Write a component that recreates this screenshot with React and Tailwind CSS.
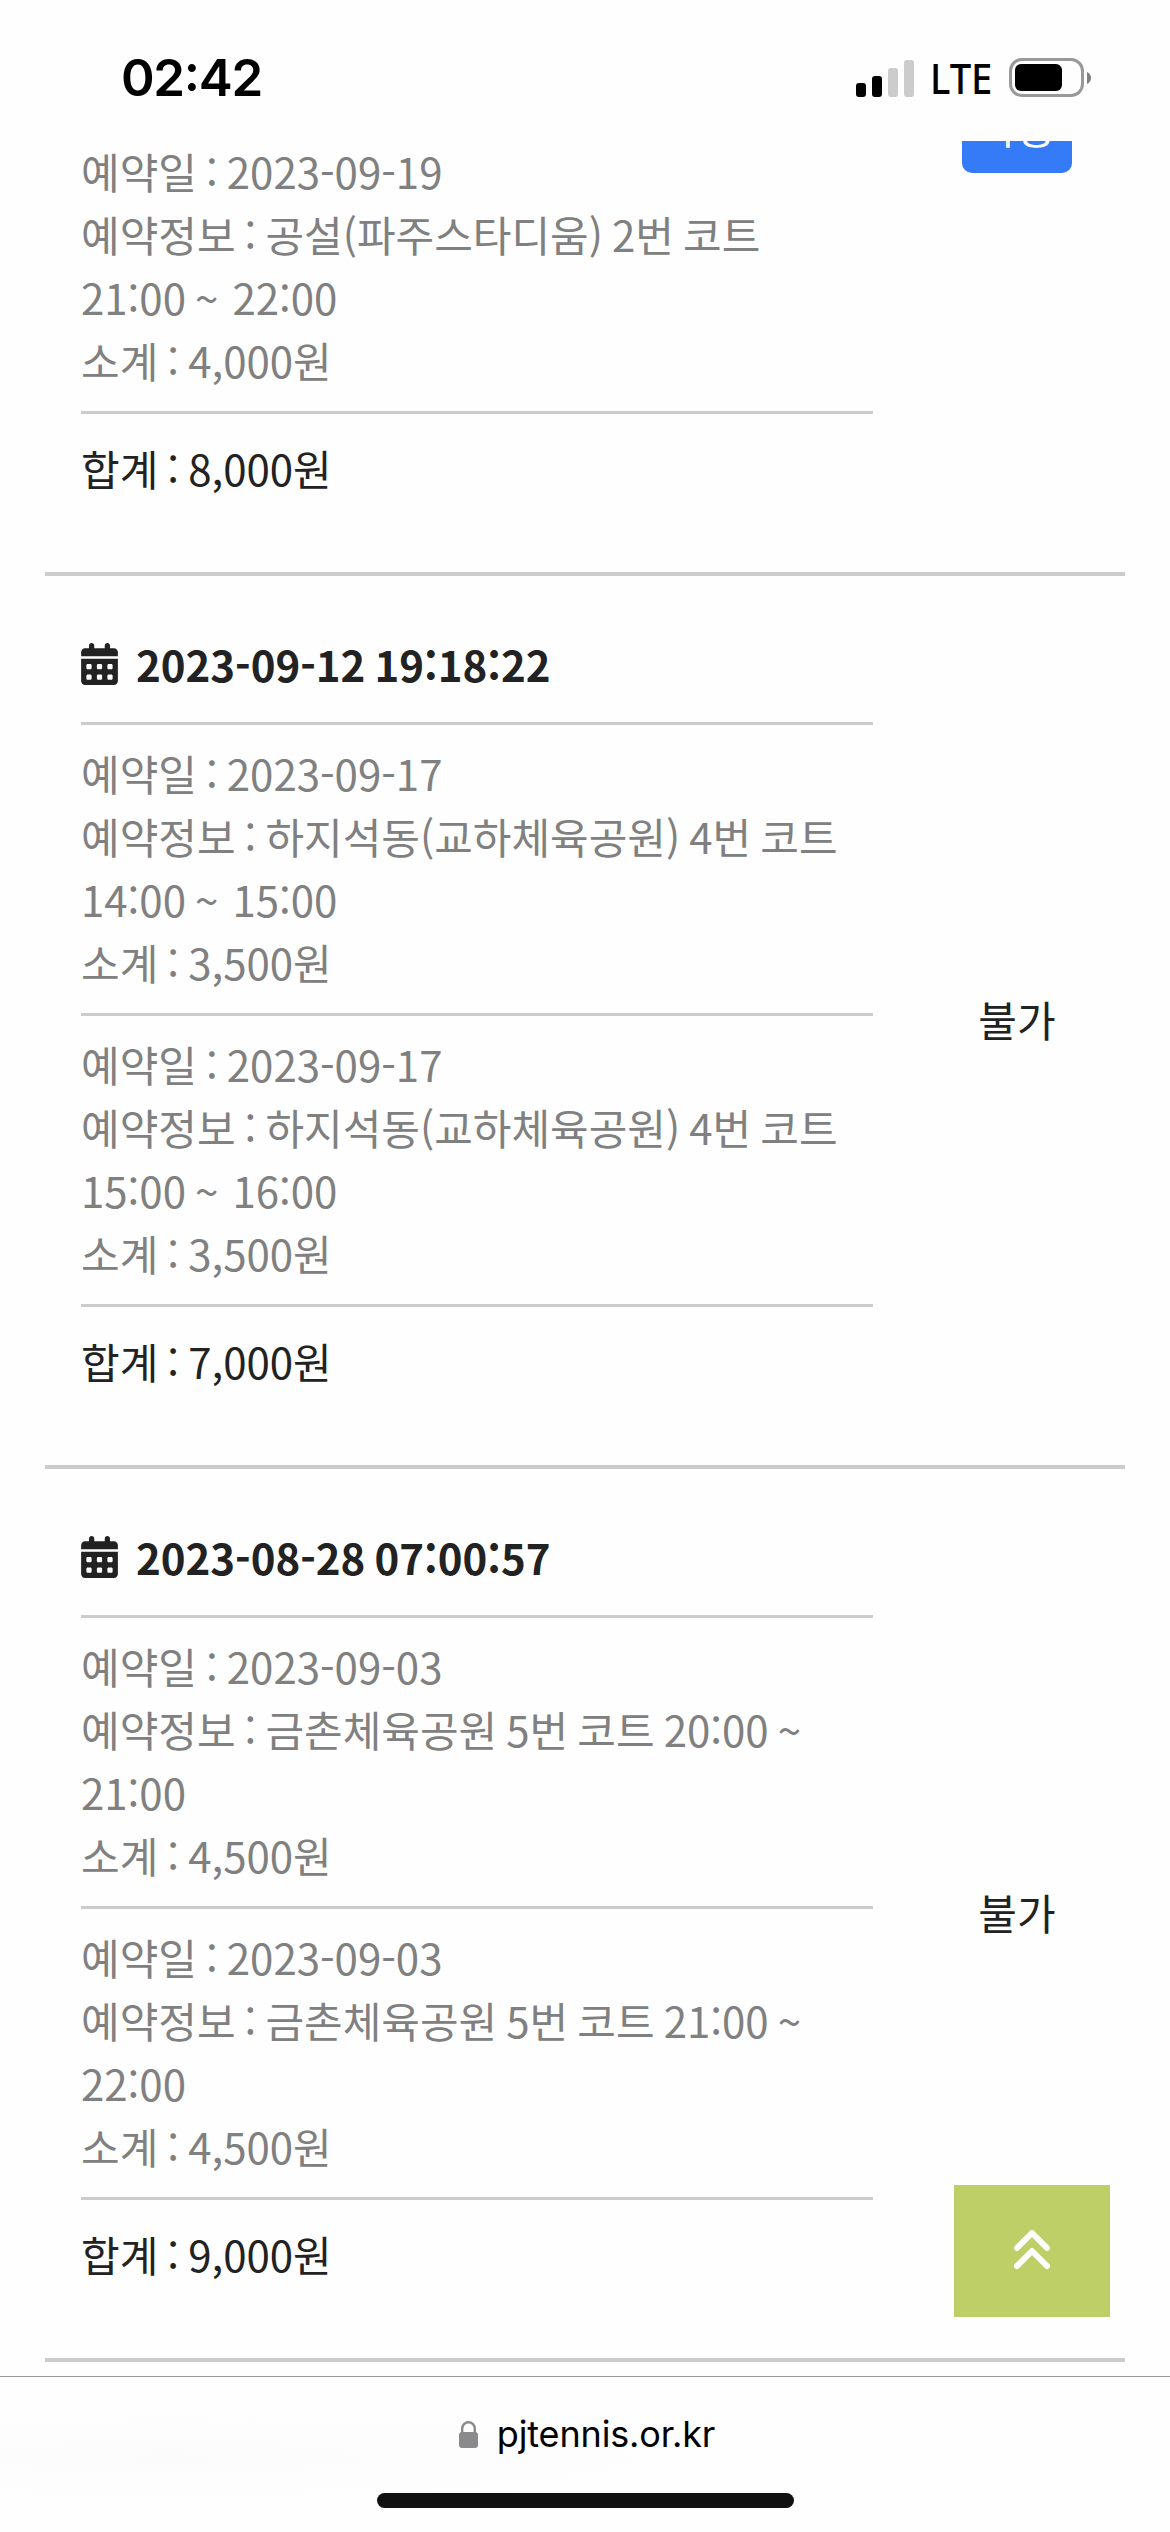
import { FaCalendarDays } from "react-icons/fa6";

const bookings = [
  {
    entries: [
      ["2023-09-19", "공설(파주스타디움) 2번 코트", "21:00", "22:00", "4,000원"],
    ],
    total: "8,000원",
    available: true,
  },
  {
    ordered: "2023-09-12 19:18:22",
    entries: [
      ["2023-09-17", "하지석동(교하체육공원) 4번 코트", "14:00", "15:00", "3,500원"],
      ["2023-09-17", "하지석동(교하체육공원) 4번 코트", "15:00", "16:00", "3,500원"],
    ],
    total: "7,000원",
  },
  {
    ordered: "2023-08-28 07:00:57",
    entries: [
      ["2023-09-03", "금촌체육공원 5번 코트", "20:00", "21:00", "4,500원"],
      ["2023-09-03", "금촌체육공원 5번 코트", "21:00", "22:00", "4,500원"],
    ],
    total: "9,000원",
  },
];

function StatusBar() {
  return (
    <header className="flex h-[141px] shrink-0 items-start justify-between pl-[121px] pr-[79px] font-['Inter',sans-serif] text-black">
      <time className="mt-[46px] text-[51px] font-semibold leading-[64px] tracking-[-1.3px] [font-feature-settings:'case']">
        02:42
      </time>
      <div className="mt-[58px] flex h-[39px] items-center">
        <div className="flex h-[38px] items-end gap-[6px]">
          <i className="h-[14px] w-[10px] rounded-[3px] bg-black" />
          <i className="h-[21px] w-[10px] rounded-[3px] bg-black" />
          <i className="h-[29px] w-[10px] rounded-[3px] bg-[#ccc]" />
          <i className="h-[37px] w-[10px] rounded-[3px] bg-[#ccc]" />
        </div>
        <span className="ml-[16px] w-[79px] origin-left scale-x-[0.91] font-['Noto_Sans',sans-serif] text-[42px] font-medium leading-[39px]">
          LTE
        </span>
        <div className="flex h-[39px] w-[75px] items-center rounded-[13px] border-[3px] border-[#999] pl-[3px]">
          <div className="h-[27px] w-[47px] rounded-[6px] bg-black" />
        </div>
        <svg className="ml-[3px] h-[12px] w-[4px]" viewBox="0 0 4 12">
          <path d="M0 0C2.5 1 4 3.4 4 6S2.5 11 0 12Z" fill="#808080" />
        </svg>
      </div>
    </header>
  );
}

function Booking({ ordered, entries, total, available }) {
  return (
    <li className="flex border-b-4 border-[#ccc]">
      <div className="ml-[36px] w-[792px] pb-[73px]">
        {ordered && (
          <h2 className="flex items-center gap-[18px] pb-[27px] pt-[56px] font-bold">
            <FaCalendarDays className="h-[42px] w-[37px]" />
            {ordered}
          </h2>
        )}
        {entries.map(([date, court, from, to, price], i) => (
          <div
            key={i}
            className={
              ordered
                ? "border-t-[3px] border-[#ccc] pb-[20px] pt-[16px] text-[#808080]"
                : "-mt-[2px] pb-[20px] text-[#808080]"
            }
          >
            <p>예약일 : {date}</p>
            <p>
              예약정보 : {court} {from} <span className="mr-[5px]">~</span> {to}
            </p>
            <p>소계 : {price}</p>
          </div>
        ))}
        <p className="border-t-[3px] border-[#ccc] pt-[22px]">합계 : {total}</p>
      </div>
      <div className="ml-auto flex w-[216px] justify-center">
        {available ? (
          <button className="-mt-[59px] h-[91px] w-[110px] rounded-[10px] bg-[#357af6] pb-[5px] text-white">가능</button>
        ) : (
          <span className="self-center pb-[4px]">불가</span>
        )}
      </div>
    </li>
  );
}

export default function App() {
  return (
    <div className="relative flex h-[2532px] w-[1170px] flex-col overflow-hidden bg-[#fefefe]">
      <StatusBar />
      <main
        lang="ko"
        className="min-h-0 flex-1 overflow-hidden px-[45px] font-['Noto_Sans_CJK_KR',sans-serif] text-[42px] leading-[63px] text-[#222] [word-spacing:-2.7px]"
      >
        <ul>
          {bookings.map((b) => (
            <Booking key={b.total} {...b} />
          ))}
        </ul>
      </main>
      <button className="absolute left-[954px] top-[2185px] flex h-[132px] w-[156px] items-center justify-center bg-[#bfcf67] pb-[3px]">
        <svg
          className="h-[39px] w-[36px]"
          viewBox="0 0 36 39"
          fill="none"
          stroke="#fff"
          strokeWidth="6"
          strokeLinecap="round"
          strokeLinejoin="round"
        >
          <path d="M3 18 18 3 33 18M3 36 18 21 33 36" />
        </svg>
      </button>
      <footer className="flex h-[156px] shrink-0 flex-col items-center border-t border-[#999] bg-[radial-gradient(ellipse_at_170px_80px,#fbfbfb,#fefefe_540px)]">
        <div className="mt-[34px] flex h-[46px] items-center pl-[4px] font-['Inter',sans-serif] text-[36px] leading-[46px] tracking-[-0.15px] text-black">
          <svg className="mr-[19px] h-[27px] w-[19px]" viewBox="0 0 19 27">
            <path d="M3.2 12V7.5a6.3 6.3 0 0 1 12.6 0V12" fill="none" stroke="#8a8a8d" strokeWidth="2.4" />
            <rect y="11" width="19" height="16" rx="3" fill="#8a8a8d" />
          </svg>
          <span>pjtennis.or.kr</span>
        </div>
        <div className="mt-[36px] h-[15px] w-[417px] rounded-full bg-[#111]" />
      </footer>
    </div>
  );
}
